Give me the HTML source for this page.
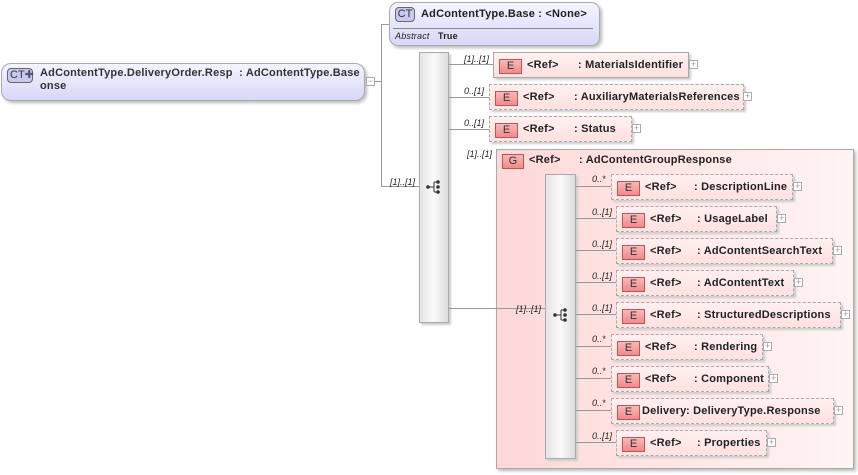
<!DOCTYPE html>
<html><head><meta charset="utf-8"><style>
*{margin:0;padding:0;box-sizing:border-box}
body{width:858px;height:475px;background:#fff;position:relative;overflow:hidden;font-family:"Liberation Sans",Arial,sans-serif;font-size:11px;font-weight:bold;color:#222;letter-spacing:0.2px}
.a{position:absolute}
.ln{position:absolute;background:#999}
.el{position:absolute;height:26px;background:linear-gradient(#fff0f0,#ffe0e0);border:1px dashed #aaa;box-shadow:2px 2px 2px #ccc}
.el.s{border:1px solid #aaa}
.ei{position:absolute;left:5px;top:6px;width:23px;height:15px;background:linear-gradient(#f8b8b8,#f08a8a);border:1px solid #b55;color:#333;font-weight:normal;font-size:11px;text-align:center;line-height:13px;letter-spacing:0}
.rf{position:absolute;left:33px;top:6px}
.nm{position:absolute;top:6px;white-space:nowrap}
.pl{position:absolute;width:9px;height:9px;border:1px solid #aaa;background:#fff;font-size:9px;line-height:7px;text-align:center;color:#999;font-weight:normal;letter-spacing:0}
.ml{position:absolute;font-style:italic;font-weight:normal;font-size:9px;color:#222;letter-spacing:0}
.seq{position:absolute;background:linear-gradient(90deg,#e4e4e4,#fafafa 50%,#ddd);border:1px solid #aaa;box-shadow:2px 2px 2px #ccc}
</style></head><body>

<div class="a" style="left:1px;top:63px;width:364px;height:38px;border:1px solid #aaa;border-radius:10px;background:linear-gradient(#f4f4ff,#d8d8f8);box-shadow:2px 2px 3px #bbb"></div>
<div class="a" style="left:7px;top:68px;width:26px;height:15px;border:1px solid #666;border-radius:4px;background:#c8c8f0;font-weight:normal;font-size:11px;line-height:13px;padding-left:2px;color:#333;letter-spacing:0">CT<span style="color:#557">✚</span></div>
<div class="a" style="left:40px;top:67px;line-height:13px;color:#333">AdContentType.DeliveryOrder.Resp&nbsp;&nbsp;: AdContentType.Base<br>onse</div>
<div class="pl" style="left:366px;top:77px">−</div>
<div class="ln" style="left:375px;top:81px;width:6px;height:1px"></div>
<div class="ln" style="left:381px;top:24px;width:1px;height:163px"></div>
<div class="ln" style="left:381px;top:24px;width:8px;height:1px"></div>
<div class="ln" style="left:381px;top:186px;width:38px;height:1px"></div>
<div class="ml" style="left:390px;top:177px">[1]..[1]</div>

<div class="a" style="left:389px;top:2px;width:211px;height:44px;border:1px solid #aaa;border-radius:9px;background:linear-gradient(#f4f4ff,#d8d8f8);box-shadow:2px 2px 3px #bbb"></div>
<div class="a" style="left:395px;top:7px;width:20px;height:15px;border:1px solid #666;border-radius:4px;background:#c8c8f0;font-weight:normal;line-height:13px;text-align:center;color:#333;letter-spacing:0">CT</div>
<div class="a" style="left:421px;top:8px">AdContentType.Base&nbsp;: &lt;None&gt;</div>
<div class="ln" style="left:393px;top:28px;width:200px;height:1px;background:#888"></div>
<div class="a" style="left:395px;top:31px;font-size:9px;font-weight:normal;font-style:italic">Abstract</div>
<div class="a" style="left:438px;top:31px;font-size:9px">True</div>

<div class="seq" style="left:419px;top:52px;width:30px;height:271px"></div>
<svg class="a" style="left:426px;top:179px" width="16" height="16"><line x1="2" y1="8" x2="8" y2="8" stroke="#333"/><line x1="8" y1="3" x2="8" y2="13" stroke="#333"/><line x1="8" y1="3" x2="12" y2="3" stroke="#333"/><line x1="8" y1="13" x2="12" y2="13" stroke="#333"/><circle cx="2" cy="8" r="1.8" fill="#333"/><circle cx="12" cy="3" r="1.8" fill="#333"/><circle cx="12" cy="8" r="1.8" fill="#333"/><circle cx="12" cy="13" r="1.8" fill="#333"/></svg>

<div class="ln" style="left:449px;top:64px;width:44px;height:1px"></div>
<div class="ml" style="left:464px;top:54px">[1]..[1]</div>
<div class="el s" style="left:493px;top:52px;width:196px"><div class="ei">E</div><div class="rf">&lt;Ref&gt;</div><div class="nm" style="left:84px">: MaterialsIdentifier</div></div>
<div class="pl" style="left:689px;top:60px">+</div>

<div class="ln" style="left:449px;top:97px;width:40px;height:1px"></div>
<div class="ml" style="left:464px;top:86px">0..[1]</div>
<div class="el" style="left:489px;top:84px;width:255px"><div class="ei">E</div><div class="rf">&lt;Ref&gt;</div><div class="nm" style="left:84px">: AuxiliaryMaterialsReferences</div></div>
<div class="pl" style="left:743px;top:92px">+</div>

<div class="ln" style="left:449px;top:129px;width:40px;height:1px"></div>
<div class="ml" style="left:464px;top:118px">0..[1]</div>
<div class="el" style="left:489px;top:116px;width:143px"><div class="ei">E</div><div class="rf">&lt;Ref&gt;</div><div class="nm" style="left:84px">: Status</div></div>
<div class="pl" style="left:632px;top:124px">+</div>

<div class="ml" style="left:467px;top:149px">[1]..[1]</div>
<div class="a" style="left:496px;top:149px;width:358px;height:320px;border:1px solid #aaa;background:linear-gradient(90deg,#ffd8d8,#fff4f4);box-shadow:2px 2px 3px #bbb"></div>
<div class="a" style="left:502px;top:154px;width:22px;height:15px;background:linear-gradient(#f8b8b8,#f08a8a);border:1px solid #b55;font-weight:normal;text-align:center;line-height:13px;color:#333">G</div>
<div class="a" style="left:529px;top:154px">&lt;Ref&gt;</div>
<div class="a" style="left:579px;top:154px">: AdContentGroupResponse</div>
<div class="ln" style="left:449px;top:308px;width:96px;height:1px"></div>
<div class="ml" style="left:516px;top:304px">[1]..[1]</div>

<div class="seq" style="left:545px;top:174px;width:31px;height:285px"></div>
<svg class="a" style="left:553px;top:307px" width="16" height="16"><line x1="2" y1="8" x2="8" y2="8" stroke="#333"/><line x1="8" y1="3" x2="8" y2="13" stroke="#333"/><line x1="8" y1="3" x2="12" y2="3" stroke="#333"/><line x1="8" y1="13" x2="12" y2="13" stroke="#333"/><circle cx="2" cy="8" r="1.8" fill="#333"/><circle cx="12" cy="3" r="1.8" fill="#333"/><circle cx="12" cy="8" r="1.8" fill="#333"/><circle cx="12" cy="13" r="1.8" fill="#333"/></svg>

<div class="ln" style="left:576px;top:186px;width:35px;height:1px"></div><div class="ml" style="left:592px;top:174px">0..*</div>
<div class="el" style="left:611px;top:174px;width:182px"><div class="ei">E</div><div class="rf">&lt;Ref&gt;</div><div class="nm" style="left:82px">: DescriptionLine</div></div><div class="pl" style="left:793px;top:182px">+</div>

<div class="ln" style="left:576px;top:218px;width:40px;height:1px"></div><div class="ml" style="left:592px;top:207px">0..[1]</div>
<div class="el" style="left:616px;top:206px;width:161px"><div class="ei">E</div><div class="rf">&lt;Ref&gt;</div><div class="nm" style="left:80px">: UsageLabel</div></div><div class="pl" style="left:777px;top:214px">+</div>

<div class="ln" style="left:576px;top:250px;width:40px;height:1px"></div><div class="ml" style="left:592px;top:239px">0..[1]</div>
<div class="el" style="left:616px;top:238px;width:217px"><div class="ei">E</div><div class="rf">&lt;Ref&gt;</div><div class="nm" style="left:80px">: AdContentSearchText</div></div><div class="pl" style="left:833px;top:246px">+</div>

<div class="ln" style="left:576px;top:282px;width:40px;height:1px"></div><div class="ml" style="left:592px;top:271px">0..[1]</div>
<div class="el" style="left:616px;top:270px;width:178px"><div class="ei">E</div><div class="rf">&lt;Ref&gt;</div><div class="nm" style="left:80px">: AdContentText</div></div><div class="pl" style="left:794px;top:278px">+</div>

<div class="ln" style="left:576px;top:314px;width:40px;height:1px"></div><div class="ml" style="left:592px;top:303px">0..[1]</div>
<div class="el" style="left:616px;top:302px;width:225px"><div class="ei">E</div><div class="rf">&lt;Ref&gt;</div><div class="nm" style="left:80px">: StructuredDescriptions</div></div><div class="pl" style="left:841px;top:310px">+</div>

<div class="ln" style="left:576px;top:346px;width:35px;height:1px"></div><div class="ml" style="left:592px;top:334px">0..*</div>
<div class="el" style="left:611px;top:334px;width:152px"><div class="ei">E</div><div class="rf">&lt;Ref&gt;</div><div class="nm" style="left:82px">: Rendering</div></div><div class="pl" style="left:763px;top:342px">+</div>

<div class="ln" style="left:576px;top:378px;width:35px;height:1px"></div><div class="ml" style="left:592px;top:366px">0..*</div>
<div class="el" style="left:611px;top:366px;width:158px"><div class="ei">E</div><div class="rf">&lt;Ref&gt;</div><div class="nm" style="left:82px">: Component</div></div><div class="pl" style="left:769px;top:374px">+</div>

<div class="ln" style="left:576px;top:410px;width:35px;height:1px"></div><div class="ml" style="left:592px;top:398px">0..*</div>
<div class="el" style="left:611px;top:398px;width:223px"><div class="ei">E</div><div class="rf" style="left:30px">Delivery</div><div class="nm" style="left:74px">: DeliveryType.Response</div></div><div class="pl" style="left:834px;top:406px">+</div>

<div class="ln" style="left:576px;top:442px;width:40px;height:1px"></div><div class="ml" style="left:592px;top:431px">0..[1]</div>
<div class="el" style="left:616px;top:430px;width:151px"><div class="ei">E</div><div class="rf">&lt;Ref&gt;</div><div class="nm" style="left:80px">: Properties</div></div><div class="pl" style="left:767px;top:438px">+</div>

</body></html>
